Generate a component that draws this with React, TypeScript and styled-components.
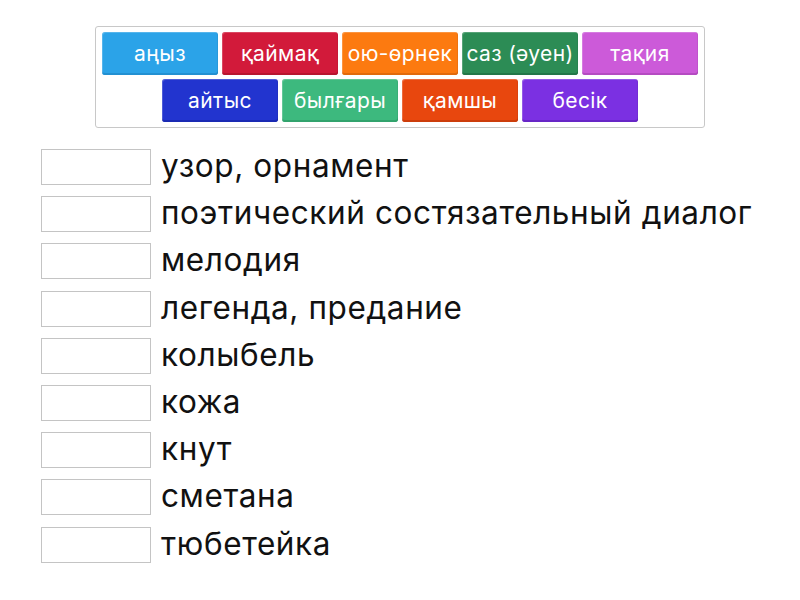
import React from 'react';
import styled, { createGlobalStyle } from 'styled-components';

const GlobalStyle = createGlobalStyle`
  html, body {
    margin: 0;
    padding: 0;
    background: #ffffff;
  }
  body {
    font-family: Inter, "Open Sans", "Noto Sans", sans-serif;
  }
`;

const Page = styled.div`
  width: 800px;
  height: 600px;
  box-sizing: border-box;
  padding-top: 26px;
  display: flex;
  flex-direction: column;
`;

const WordBank = styled.div`
  width: 610px;
  margin-left: 95px;
  box-sizing: border-box;
  border: 1px solid #c8c8c8;
  border-radius: 3px;
  padding: 3px 4px;
  display: flex;
  flex-wrap: wrap;
  justify-content: center;
  background: #fff;
`;

const Tile = styled.div<{ $bg: string; $edge: string }>`
  width: 116px;
  height: 43px;
  margin: 2px;
  box-sizing: border-box;
  border-radius: 3px;
  background: ${p => p.$bg};
  box-shadow: inset 1px 1px 0 rgba(255, 255, 255, 0.2),
    inset -1px 0 0 rgba(0, 0, 0, 0.06),
    inset 0 -2px 0 ${p => p.$edge};
  color: #fff;
  font-size: 21px;
  display: flex;
  align-items: center;
  justify-content: center;
  padding-bottom: 1px;
  white-space: nowrap;
  letter-spacing: 0.4px;
`;

const Answers = styled.div`
  margin-top: 21px;
  padding-left: 41px;
  display: flex;
  flex-direction: column;
`;

const Row = styled.div`
  height: 47.2px;
  display: flex;
  align-items: flex-start;
`;

const Slot = styled.div`
  width: 110px;
  height: 36px;
  box-sizing: border-box;
  border: 1px solid #c4c4c4;
  background: #fff;
  flex-shrink: 0;
`;

const Label = styled.div`
  margin-left: 10px;
  height: 36px;
  line-height: 34px;
  font-size: 31.5px;
  color: #111;
  white-space: nowrap;
  letter-spacing: 0.6px;
`;

const tiles = [
  { text: 'аңыз', bg: '#2ba3e8', edge: '#2290d2' },
  { text: 'қаймақ', bg: '#d21a3a', edge: '#b8152f' },
  { text: 'ою-өрнек', bg: '#fc7a10', edge: '#e26a0b' },
  { text: 'саз (әуен)', bg: '#2c8c55', edge: '#237748' },
  { text: 'тақия', bg: '#cc5ad9', edge: '#b54bc2' },
  { text: 'айтыс', bg: '#2234cf', edge: '#1a2ab3' },
  { text: 'былғары', bg: '#3db97e', edge: '#32a36d' },
  { text: 'қамшы', bg: '#e8470e', edge: '#cc3d0b' },
  { text: 'бесік', bg: '#7b30e2', edge: '#6726c6' },
];

const labels = [
  'узор, орнамент',
  'поэтический состязательный диалог',
  'мелодия',
  'легенда, предание',
  'колыбель',
  'кожа',
  'кнут',
  'сметана',
  'тюбетейка',
];

export default function App() {
  return (
    <>
      <GlobalStyle />
      <Page>
        <WordBank>
          {tiles.map(t => (
            <Tile key={t.text} $bg={t.bg} $edge={t.edge}>{t.text}</Tile>
          ))}
        </WordBank>
        <Answers>
          {labels.map(l => (
            <Row key={l}>
              <Slot />
              <Label>{l}</Label>
            </Row>
          ))}
        </Answers>
      </Page>
    </>
  );
}
